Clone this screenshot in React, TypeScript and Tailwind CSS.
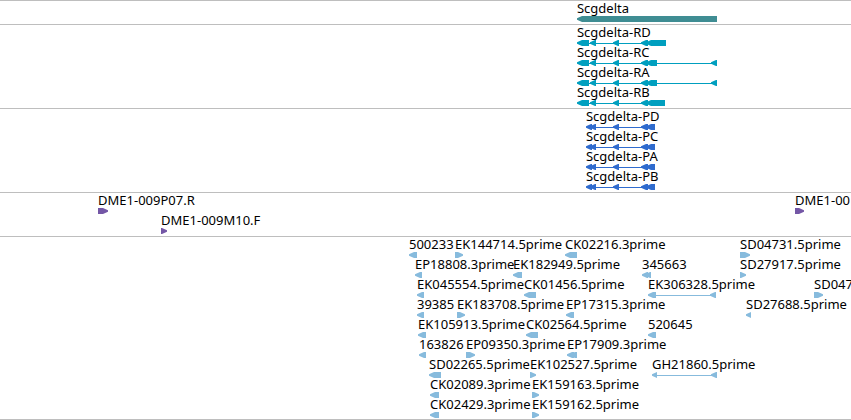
import React from 'react';

type Direction = 'left' | 'right';

// [start, end] of one block, in view units
type Block = [number, number];

interface Feature {
  name: string;
  blocks: Block[];
  dir?: Direction;
}

interface Track {
  id: string;
  color: string;
  rows: Feature[][];
}

// number of units shown across the full width of the browser
const VIEW_SPAN = 851;

const tracks: Track[] = [
  {
    id: 'Genes',
    color: 'text-[#3f8d93]',
    rows: [[{ name: 'Scgdelta', blocks: [[577, 717]] }]],
  },
  {
    id: 'Transcripts',
    color: 'text-[#009fbf]',
    rows: [
      [{ name: 'Scgdelta-RD', blocks: [[577, 589], [590, 596], [613, 619], [641, 648], [646, 666]] }],
      [{ name: 'Scgdelta-RC', blocks: [[577, 589], [590, 596], [613, 619], [641, 648], [646, 657], [711, 717]] }],
      [{ name: 'Scgdelta-RA', blocks: [[577, 589], [590, 596], [613, 619], [641, 648], [646, 657], [711, 717]] }],
      [{ name: 'Scgdelta-RB', blocks: [[577, 589], [590, 596], [613, 619], [641, 648], [646, 665]] }],
    ],
  },
  {
    id: 'Coding sequences',
    color: 'text-[#2f6bce]',
    rows: ['PD', 'PC', 'PA', 'PB'].map((suffix) => [
      { name: `Scgdelta-${suffix}`, blocks: [[586, 592], [590, 596], [613, 619], [641, 648], [646, 655]] as Block[] },
    ]),
  },
  {
    id: 'BAC ends',
    color: 'text-[#7457a6]',
    rows: [
      [
        { name: 'DME1-009P07.R', blocks: [[98, 108]], dir: 'right' },
        { name: 'DME1-00', blocks: [[795, 804]], dir: 'right' },
      ],
      [{ name: 'DME1-009M10.F', blocks: [[161, 167]], dir: 'right' }],
    ],
  },
  {
    id: 'ESTs',
    color: 'text-[#87bbdd]',
    rows: [
      [
        { name: '500233', blocks: [[409, 417]] },
        { name: 'EK144714.5prime', blocks: [[455, 463]], dir: 'right' },
        { name: 'CK02216.3prime', blocks: [[565, 577]] },
        { name: 'SD04731.5prime', blocks: [[740, 750]], dir: 'right' },
      ],
      [
        { name: 'EP18808.3prime', blocks: [[415, 422]] },
        { name: 'EK182949.5prime', blocks: [[513, 522]] },
        { name: '345663', blocks: [[642, 648], [645, 651]] },
        { name: 'SD27917.5prime', blocks: [[740, 746]], dir: 'right' },
      ],
      [
        { name: 'EK045554.5prime', blocks: [[417, 424]] },
        { name: 'CK01456.5prime', blocks: [[524, 536]] },
        { name: 'EK306328.5prime', blocks: [[648, 656], [710, 716]] },
        { name: 'SD047', blocks: [[814, 823]], dir: 'right' },
      ],
      [
        { name: '39385', blocks: [[417, 424]] },
        { name: 'EK183708.5prime', blocks: [[457, 465]], dir: 'right' },
        { name: 'EP17315.3prime', blocks: [[566, 574]] },
        { name: 'SD27688.5prime', blocks: [[746, 751]] },
      ],
      [
        { name: 'EK105913.5prime', blocks: [[418, 426]] },
        { name: 'CK02564.5prime', blocks: [[526, 538]] },
        { name: '520645', blocks: [[648, 656]] },
      ],
      [
        { name: '163826', blocks: [[419, 426]] },
        { name: 'EP09350.3prime', blocks: [[466, 475]], dir: 'right' },
        { name: 'EP17909.3prime', blocks: [[567, 574], [570, 577]] },
      ],
      [
        { name: 'SD02265.5prime', blocks: [[429, 441]] },
        { name: 'EK102527.5prime', blocks: [[530, 536]], dir: 'right' },
        { name: 'GH21860.5prime', blocks: [[652, 657], [711, 717]] },
      ],
      [
        { name: 'CK02089.3prime', blocks: [[430, 439]] },
        { name: 'EK159163.5prime', blocks: [[532, 539]], dir: 'right' },
      ],
      [
        { name: 'CK02429.3prime', blocks: [[430, 439]] },
        { name: 'EK159162.5prime', blocks: [[532, 539]], dir: 'right' },
      ],
    ],
  },
];

const blockPath = (start: number, end: number, dir: Direction) => {
  const head = Math.min(5, end - start);
  if (dir === 'right') {
    return `M${start} 0H${end - head}L${end} 2.2V3.8L${end - head} 6H${start}Z`;
  }
  return `M${end} 0H${start + head}L${start} 2.2V3.8L${start + head} 6H${end}Z`;
};

const Glyph = ({ blocks, dir = 'left' }: { blocks: Block[]; dir?: Direction }) => {
  const origin = blocks[0][0];
  const width = blocks[blocks.length - 1][1] - origin;

  return (
    <svg width={width} height={6} viewBox={`0 0 ${width} 6`} fill="currentColor" className="block" aria-hidden="true">
      {/* intron line */}
      {blocks.length > 1 && <rect x={2} y={3} width={width - 4} height={1} />}
      {blocks.map(([start, end]) => (
        <path key={start} d={blockPath(start - origin, end - origin, dir)} />
      ))}
    </svg>
  );
};

const FeatureItem = ({ feature, color }: { feature: Feature; color: string }) => (
  <div
    className={`absolute top-0 whitespace-nowrap ${color}`}
    style={{ left: `${(feature.blocks[0][0] / VIEW_SPAN) * 100}%` }}
  >
    <div className="pb-0.5 text-black">{feature.name}</div>
    <Glyph blocks={feature.blocks} dir={feature.dir} />
  </div>
);

export default function App() {
  return (
    <main className="w-full overflow-hidden border-b border-[#bebebe] bg-white font-['Noto_Sans','DejaVu_Sans',sans-serif] text-[13px] leading-3">
      {tracks.map((track) => (
        <section key={track.id} aria-label={track.id} className="border-t border-[#bebebe] pt-px pb-0.5 last:pb-px">
          {track.rows.map((row, i) => (
            <div key={i} className="relative h-5">
              {row.map((feature) => (
                <FeatureItem key={feature.name} feature={feature} color={track.color} />
              ))}
            </div>
          ))}
        </section>
      ))}
    </main>
  );
}
